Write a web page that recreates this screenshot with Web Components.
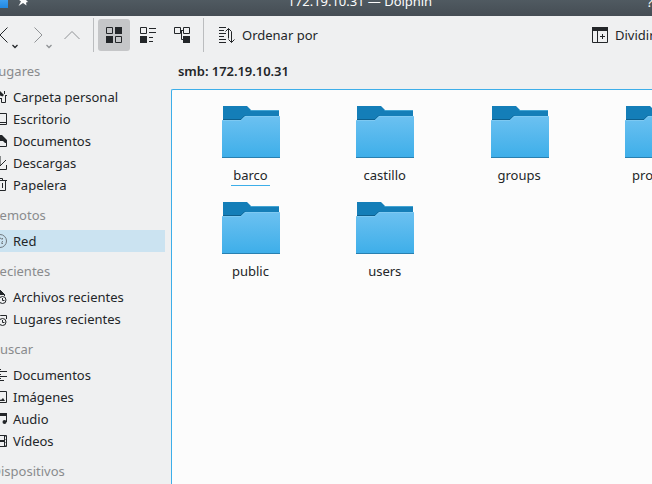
<!DOCTYPE html>
<html lang="es"><head><meta charset="utf-8"><title>Dolphin</title>
<style>
html,body{margin:0;height:100%;overflow:hidden}
body{font:13px/18px "Noto Sans",sans-serif;color:#232629;background:#eff0f1}
</style></head><body>
<dolphin-window></dolphin-window>
<script>
const define=(name,html,setup)=>customElements.define(name,class extends HTMLElement{
  connectedCallback(){
    if(this.shadowRoot)return;
    const t=document.createElement('template');
    t.innerHTML=html;
    const content=t.content.cloneNode(true);
    if(setup)setup(this,content);
    this.attachShadow({mode:'open'}).append(content);
  }
});
const icons={
  back:'<path d="M11.500 0.500 4 8l7.500 7.500"/>',
  forward:'<path d="M4.500 .5 12 8l-7.500 7.500"/>',
  up:'<path d="M.5 12 8 4.500l7.500 7.500"/>',
  grid:'<path d="M.5 .5h6v6h-6zM9.500 9.500h6v6h-6z"/><path class="f" d="M9 0h7v7H9zM0 9h7v7H0z"/>',
  compact:'<path d="M.5 .5h6v6h-6zM9 1.500h7M9 5.500h7M9 10.500h4M9 14.500h4"/><path class="f" d="M0 9h7v7H0z"/>',
  tree:'<path d="M.5 .5h6v6h-6zM9.500 .5h6v6h-6zM7 3.500h2M7.500 4v8.500H9"/><path class="f" d="M9 9h7v7H9z"/>',
  sort:'<path d="M0 .5h7M0 3.500h5M0 6.500h7M0 9.500h5M0 12.500h7M0 15.500h7M9.500 1.500v10M12.500 4.500v11M6.500 4.500l3-3 3 3M9.500 12.500l3 3 3-3"/>',
  split:'<path d="M.5 .5h15v15H.5zM5.500 4v12M8 9.500h5M10.500 7v5"/><path class="f" d="M0 0h16v4H0z"/>',
  home:'<path d="M2.500 9v4.500h3v-4M9.500 9v4.500h4V7M12.500 5V2M13 6.500h2M9 9.500H6"/><path class="f" d="M7 2h1l4 4-1.500 1.500L8 6.500 3 10 1 8z"/>',
  desktop:'<path d="M1.500 2.500h13v11h-13zM1 11.500h13"/>',
  document:'<path d="M2.500 2.500h6l6 6v5h-12z"/><path class="f" d="M8 2h2l5 5v3h-2l-2-2H8z"/>',
  download:'<path d="M1.500 10v4.500h13V10M8 1v10M4.500 7.500 8 11l6-6"/>',
  trash:'<path d="M2.500 3v10.500h11V3M1 3.500h14M5.500 3V1.500h5V3M6.500 6v5M10.500 6v5"/>',
  network:'<circle cx="8" cy="8" r="6.500"/><circle cx="7.500" cy="8" r="3" stroke-dasharray="3 1.700"/><path d="M10 5.500h1M10 10.500h1"/>',
  recent:'<path d="M6 14.500H2.500v-13h6l4 4V7M8.500 1.500v4h4"/><path class="f" d="M8 1l5 5H8z"/><circle cx="10.500" cy="11" r="3.500"/><path d="M10.500 9v2.500h2"/>',
  places:'<path d="M6 13.500H1.500v-11h5l2 2h6V8"/><circle cx="10.500" cy="11" r="3.500"/><path d="M10.500 9v2.500h2"/>',
  text:'<path d="M1 2.500h8M1 4.500h14M1 7.500h8M1 9.500h14M1 11.500h8M1 13.500h11"/>',
  image:'<path d="M1.500 2.500h13v11h-13z"/><path class="f" d="m5 12 2-2 2 1 2-2 2 3z"/>',
  audio:'<path d="M5.500 12V2.500h9V11M5 4.500h9"/><path class="f" d="M5 2h10v2H5z"/><circle class="f" cx="12.500" cy="11" r="2"/><circle class="f" cx="4" cy="12" r="2"/>',
  video:'<path d="M1.500 2.500h13v11h-13zM3.500 2v12M12.500 2v12"/><path class="f" d="M4 7h8v2H4z"/><path d="M14 3v11" stroke-dasharray="1 2"/>'
};
define('line-icon',`<style>:host{display:block;width:16px;height:16px;flex:none}svg{display:block;overflow:visible;fill:none;stroke:currentColor}.f{fill:currentColor;stroke:none}</style><svg width="16" height="16" viewBox="0 0 16 16"></svg>`,
 (e,r)=>r.querySelector('svg').innerHTML=icons[e.getAttribute('name')]);
define('title-bar',`<style>
:host{display:block;position:relative;height:16px;overflow:hidden;background:linear-gradient(#505a61,#454d54);color:#fcfcfc}
.app{width:8px;height:8px;background:linear-gradient(#3d9ff0,#2188e2)}
.pin{position:absolute;left:17px;top:-5px}
.title{position:absolute;left:287.500px;top:-8px;white-space:nowrap;letter-spacing:-.03px}
.help{position:absolute;left:647px;top:-7px}
</style><div class="app"></div>
<svg class="pin" width="12" height="12"><path d="M5 1l6 6-2 .5.500 3L6 8l-4.500 3L4 6.500 1.500 4.500l3-.5z" fill="#fcfcfc"/></svg>
<span class="title"><slot></slot></span><span class="help">?</span>`);
define('tool-button',`<style>
:host{display:flex;align-items:center;justify-content:center;width:32px;height:32px;border-radius:3px;position:relative;flex:none;white-space:nowrap}
:host([checked]){background:#c5c6c8}
:host([dim]){color:#909396}
:host([wide]){width:98px;justify-content:flex-start;gap:7px}
.menu{position:absolute;left:24px;top:25px;display:none}
:host([menu]) .menu{display:block}
</style><line-icon></line-icon><slot></slot><svg class="menu" width="6" height="5" fill="none" stroke="currentColor" stroke-width="1.300"><path d="M.5 1 3 3.500 5.500 1"/></svg>`,
 (e,r)=>r.querySelector('line-icon').setAttribute('name',e.getAttribute('icon')));
define('tool-bar',`<style>
:host{display:flex;height:38px;align-items:center;overflow:hidden}
i{width:1px;height:34px;background:#bbbdbf;flex:none}
.nav{display:flex;gap:2px;margin-left:-12px;flex:none}
.views{display:flex;gap:2px;padding:0 5px 0 4px;flex:none}
.sort{margin-left:15px}.split{margin-left:275px}
.sep{margin-left:5px}
</style>
<div class="nav"><tool-button icon="back" menu></tool-button><tool-button icon="forward" dim menu></tool-button><tool-button icon="up" dim></tool-button></div>
<i class="sep"></i>
<div class="views"><tool-button icon="grid" checked></tool-button><tool-button icon="compact"></tool-button><tool-button icon="tree"></tool-button></div>
<i></i><tool-button class="sort" icon="sort" wide>Ordenar por</tool-button><tool-button class="split" icon="split" wide>Dividir</tool-button>`);
define('place-item',`<style>:host{display:flex;align-items:center;height:22px;gap:5px;white-space:nowrap}
:host([selected]){background:#cbe3f1}:host([selected]) line-icon{color:#70777d}</style><line-icon></line-icon><span><slot></slot></span>`,
 (e,r)=>r.querySelector('line-icon').setAttribute('name',e.getAttribute('icon')));
define('place-group',`<style>:host{display:block}h2{font:inherit;color:#898b8d;margin:0 0 0 -.5px;height:18px;padding:10px 0 6px}</style><h2></h2><slot></slot>`,
 (e,r)=>r.querySelector('h2').textContent=e.getAttribute('label'));
define('places-panel',`<style>:host{display:block;overflow:hidden;width:165px}nav{margin:-2px 0 0 -8px}</style><nav>
<place-group label="Lugares"><place-item icon="home">Carpeta personal</place-item><place-item icon="desktop">Escritorio</place-item><place-item icon="document">Documentos</place-item><place-item icon="download">Descargas</place-item><place-item icon="trash">Papelera</place-item></place-group>
<place-group label="Remotos"><place-item icon="network" selected>Red</place-item></place-group>
<place-group label="Recientes"><place-item icon="recent">Archivos recientes</place-item><place-item icon="places">Lugares recientes</place-item></place-group>
<place-group label="Buscar"><place-item icon="text">Documentos</place-item><place-item icon="image">Imágenes</place-item><place-item icon="audio">Audio</place-item><place-item icon="video">Vídeos</place-item></place-group>
<place-group label="Dispositivos"></place-group></nav>`);
define('folder-item',`<style>
:host{display:flex;flex-direction:column;align-items:center;height:96px}
svg{display:block}span{margin:8px 1.500px 0 0;padding:0 2px 1px;border-bottom:1px solid transparent}
:host([hovered]) span{border-color:#3daee9}
</style><svg width="58" height="52">
<defs><linearGradient id="g" x2="0" y2="1"><stop stop-color="#6cc1f1"/><stop offset="1" stop-color="#3daee9"/></linearGradient></defs>
<path d="M1 0h24l4 4h28v14H1z" fill="#147eb8"/><path d="M28.500 4.500H57" stroke="#43a4d3"/><path d="M1 13.500h18l4-4" stroke="#0d5f8d" fill="none"/>
<path d="M0 14h19l4-4h35v42H0z" fill="url(#g)"/><path d="M0 14.500h19l4-4h35" stroke="#83cbf3" stroke-width=".8" fill="none"/><path d="M0 51.500h58" stroke="#2980b0"/></svg><span><slot></slot></span>`);
define('folder-view',`<style>
:host{display:grid;grid-template-columns:repeat(4,134.33px);grid-auto-rows:96px;align-content:start;padding:16px 0 0 12px;border:1px solid #3daee9;border-right:0;border-bottom:0;border-top-left-radius:2px;background:#fcfcfc;overflow:hidden}
</style><slot></slot>`);
define('dolphin-window',`<style>
:host{display:flex;flex-direction:column;height:484px;width:652px;overflow:hidden}
.main{display:flex;gap:6px;flex:1;min-height:0}
.content{display:flex;flex-direction:column;flex:1;min-width:0}
.path{font-weight:600;padding:8px 0 9px 7px;letter-spacing:-.05px}
folder-view{flex:1;min-height:0}
</style><title-bar>172.19.10.31 — Dolphin</title-bar><tool-bar></tool-bar>
<div class="main"><places-panel></places-panel><div class="content"><div class="path">smb: 172.19.10.31</div>
<folder-view><folder-item hovered>barco</folder-item><folder-item>castillo</folder-item><folder-item>groups</folder-item><folder-item>project</folder-item><folder-item>public</folder-item><folder-item>users</folder-item></folder-view></div></div>`);
</script></body></html>
